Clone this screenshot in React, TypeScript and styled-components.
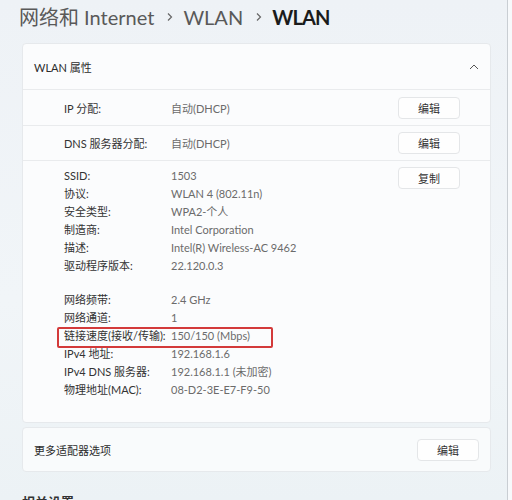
import React from "react";
import styled, { createGlobalStyle } from "styled-components";

const GlobalStyle = createGlobalStyle`
  html, body {
    margin: 0;
    padding: 0;
  }
  body {
    width: 512px;
    height: 500px;
    overflow: hidden;
    background: #eef2f6;
    font-family: Lato, "Noto Sans CJK SC", sans-serif;
  }
`;

type InfoItem = { label: string; value: string; highlight?: boolean };

const firstGroup: InfoItem[] = [
  { label: "SSID:", value: "1503" },
  { label: "协议:", value: "WLAN 4 (802.11n)" },
  { label: "安全类型:", value: "WPA2-个人" },
  { label: "制造商:", value: "Intel Corporation" },
  { label: "描述:", value: "Intel(R) Wireless-AC 9462" },
  { label: "驱动程序版本:", value: "22.120.0.3" },
];

const secondGroup: InfoItem[] = [
  { label: "网络频带:", value: "2.4 GHz" },
  { label: "网络通道:", value: "1" },
  { label: "链接速度(接收/传输):", value: "150/150 (Mbps)", highlight: true },
  { label: "IPv4 地址:", value: "192.168.1.6" },
  { label: "IPv4 DNS 服务器:", value: "192.168.1.1 (未加密)" },
  { label: "物理地址(MAC):", value: "08-D2-3E-E7-F9-50" },
];

const Chevron = () => (
  <svg width="6" height="10" viewBox="0 0 6 10">
    <polyline points="1,1.5 4.5,5 1,8.5" fill="none" stroke="#666" strokeWidth="1.2" />
  </svg>
);

const ChevronUp = () => (
  <svg width="10" height="6" viewBox="0 0 10 6">
    <polyline points="1,5 5,1 9,5" fill="none" stroke="#555" strokeWidth="1" />
  </svg>
);

export default function App() {
  return (
    <>
      <GlobalStyle />
      <Page>
        <Main>
          <Breadcrumb>
            <Crumb>网络和 Internet</Crumb>
            <Sep>
              <Chevron />
            </Sep>
            <Crumb>WLAN</Crumb>
            <Sep>
              <Chevron />
            </Sep>
            <Crumb $current>WLAN</Crumb>
          </Breadcrumb>

          <Card>
            <CardHeader>
              <HeaderTitle>WLAN 属性</HeaderTitle>
              <ChevronUp />
            </CardHeader>

            <SettingRow $height={36}>
              <Label>IP 分配:</Label>
              <Value>自动(DHCP)</Value>
              <Button>编辑</Button>
            </SettingRow>
            <SettingRow $height={35}>
              <Label>DNS 服务器分配:</Label>
              <Value>自动(DHCP)</Value>
              <Button>编辑</Button>
            </SettingRow>

            <InfoBlock>
              <InfoList>
                <Group>
                  {firstGroup.map((item) => (
                    <InfoRow key={item.label}>
                      <Label>{item.label}</Label>
                      <Value>{item.value}</Value>
                    </InfoRow>
                  ))}
                </Group>
                <Group>
                  {secondGroup.map((item) => (
                    <InfoRow key={item.label} $highlight={item.highlight}>
                      <Label>{item.label}</Label>
                      <Value>{item.value}</Value>
                    </InfoRow>
                  ))}
                </Group>
              </InfoList>
              <CopyButton>复制</CopyButton>
            </InfoBlock>
          </Card>

          <AdapterCard>
            <HeaderTitle>更多适配器选项</HeaderTitle>
            <Button>编辑</Button>
          </AdapterCard>

          <SectionTitle>相关设置</SectionTitle>
        </Main>
        <Scrollbar />
      </Page>
    </>
  );
}

const Page = styled.div`
  display: flex;
  width: 512px;
  height: 500px;
  overflow: hidden;
  background: linear-gradient(180deg, #eef2f6 0%, #f1f5f8 60%, #ecf2f5 100%);
`;

const Main = styled.div`
  width: 507px;
  flex-shrink: 0;
  padding: 0 16px 0 22px;
  box-sizing: border-box;
`;

const Scrollbar = styled.div`
  flex: 1;
  border-left: 1px solid #c9ced3;
  background: #f7f9fb;
`;

const Breadcrumb = styled.div`
  display: flex;
  align-items: center;
  height: 34px;
  margin-left: -3px;
  margin-bottom: 9px;
`;

const Crumb = styled.span<{ $current?: boolean }>`
  font-size: 20px;
  line-height: 34px;
  color: ${(p) => (p.$current ? "#1b1b1b" : "#595959")};
  font-weight: ${(p) => (p.$current ? 700 : 400)};
  letter-spacing: ${(p) => (p.$current ? "-0.8px" : "0")};
`;

const Sep = styled.span`
  display: flex;
  margin: 0 10px 0 13px;
`;

const Card = styled.div`
  background: #fbfcfd;
  border: 1px solid #e6e9ec;
  border-radius: 4px;
  display: flex;
  flex-direction: column;
`;

const CardHeader = styled.div`
  height: 46px;
  box-sizing: border-box;
  display: flex;
  align-items: center;
  justify-content: space-between;
  padding: 0 11px 0 11px;
  border-bottom: 1px solid #e9ebed;
`;

const HeaderTitle = styled.span`
  font-size: 11px;
  color: #2b2b2b;
`;

const SettingRow = styled.div<{ $height: number }>`
  height: ${(p) => p.$height}px;
  box-sizing: border-box;
  display: flex;
  align-items: center;
  padding: 0 30px 0 41px;
  border-bottom: 1px solid #e9ebed;
`;

const Label = styled.span`
  width: 107px;
  flex-shrink: 0;
  font-size: 11px;
  color: #333;
`;

const Value = styled.span`
  flex: 1;
  font-size: 11px;
  color: #6b6b6b;
`;

const Button = styled.button`
  width: 62px;
  height: 22px;
  flex-shrink: 0;
  background: #fefefe;
  border: 1px solid #e4e6e8;
  border-radius: 4px;
  font-family: inherit;
  font-size: 11px;
  color: #333;
  padding: 0;
`;

const CopyButton = styled(Button)`
  margin-top: 1px;
`;

const InfoBlock = styled.div`
  display: flex;
  align-items: flex-start;
  padding: 5px 30px 24px 41px;
`;

const InfoList = styled.div`
  flex: 1;
  display: flex;
  flex-direction: column;
  gap: 16px;
`;

const Group = styled.div`
  display: flex;
  flex-direction: column;
`;

const InfoRow = styled.div<{ $highlight?: boolean }>`
  position: relative;
  display: flex;
  align-items: center;
  height: 18px;

  ${(p) =>
    p.$highlight &&
    `
    &::after {
      content: "";
      position: absolute;
      left: -7px;
      top: 1px;
      width: 216px;
      height: 21px;
      box-sizing: border-box;
      border: 2px solid #d33a3a;
      border-radius: 2px;
    }
  `}
`;

const AdapterCard = styled.div`
  margin-top: 4px;
  height: 45px;
  box-sizing: border-box;
  background: #f9fbfc;
  border: 1px solid #e6e9ec;
  border-radius: 4px;
  display: flex;
  align-items: center;
  justify-content: space-between;
  padding: 0 11px 0 11px;
`;

const SectionTitle = styled.div`
  margin-top: 20px;
  font-size: 13px;
  font-weight: 700;
  color: #333;
`;
